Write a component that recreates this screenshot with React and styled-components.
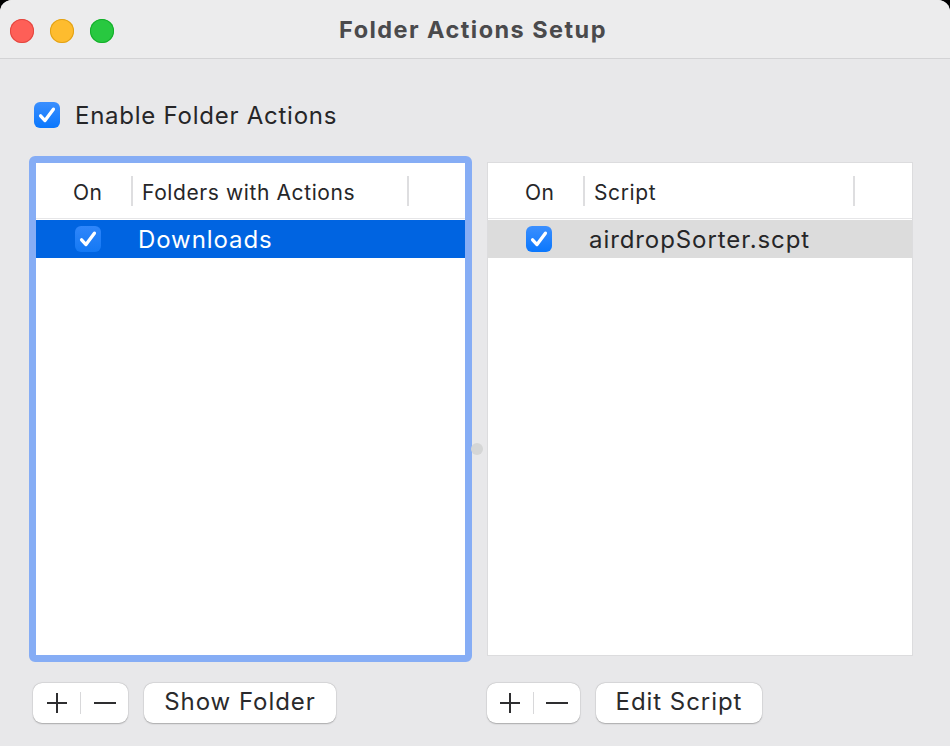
import React from 'react'
import styled, { createGlobalStyle } from 'styled-components'

const GlobalStyle = createGlobalStyle`
  html, body {
    margin: 0;
    padding: 0;
    background: #000;
  }
  body {
    font-family: Inter, "Noto Sans", "Liberation Sans", sans-serif;
    -webkit-font-smoothing: antialiased;
  }
`;

const Window = styled.div`
  width: 950px;
  height: 746px;
  display: flex;
  flex-direction: column;
  background: #e8e8ea;
  border-radius: 12px 12px 0 0;
  overflow: hidden;
`;

const TitleBar = styled.div`
  height: 58px;
  flex: none;
  display: grid;
  grid-template-columns: 1fr auto 1fr;
  align-items: center;
  background: #ececed;
  border-bottom: 1px solid #d3d3d5;
`;

const Lights = styled.div`
  display: flex;
  gap: 16px;
  padding-left: 10px;
  padding-top: 4px;
`;

const Light = styled.span`
  width: 24px;
  height: 24px;
  border-radius: 50%;
  background: ${p => p.color};
  box-shadow: inset 0 0 0 1px ${p => p.edge};
`;

const Title = styled.div`
  font-size: 23.5px;
  font-weight: 700;
  color: #4a4a4c;
  letter-spacing: 1.45px;
  margin-right: 4px;
`;

const Content = styled.div`
  flex: 1;
  display: flex;
  flex-direction: column;
`;

const EnableRow = styled.label`
  display: flex;
  align-items: center;
  gap: 15px;
  margin: 42px 0 0 34px;
  height: 28px;
  font-size: 24px;
  letter-spacing: 0.75px;
  color: #262628;
`;

const Box = styled.span`
  width: 26px;
  height: 26px;
  border-radius: 6px;
  flex: none;
  display: flex;
  align-items: center;
  justify-content: center;
  background: ${p => (p.$onBlue ? 'linear-gradient(#2f86fb, #1479f4)' : 'linear-gradient(#3b8ffe, #0a77fd)')};
`;

const Panes = styled.div`
  display: grid;
  grid-template-columns: 443px 15px 426px;
  margin: 27px 0 0 29px;
  height: 506px;
`;

const Table = styled.div`
  display: flex;
  flex-direction: column;
  background: #fff;
  border: ${p => (p.$focused ? '7px solid #86adf5' : '1px solid #dcdcde')};
  border-radius: ${p => (p.$focused ? '6px' : '0')};
  margin: ${p => (p.$focused ? '0' : '6px 0 6px')};
  overflow: hidden;
`;

const Header = styled.div`
  height: 56px;
  flex: none;
  display: flex;
  align-items: center;
  border-bottom: 1px solid #e6e6e8;
  font-size: 21px;
  color: #262628;
  padding-top: 3px;
  box-sizing: border-box;
`;

const OnHead = styled.div`
  width: 95px;
  padding-left: 37px;
  box-sizing: border-box;
  letter-spacing: 0.4px;
`;

const Divider = styled.span`
  width: 2px;
  height: 30px;
  background: #dedee0;
  flex: none;
  margin-top: -3px;
`;

const NameHead = styled.div`
  width: ${p => p.$w}px;
  padding-left: 9px;
  box-sizing: border-box;
  letter-spacing: 0.6px;
`;

const Row = styled.div`
  height: 38px;
  display: flex;
  align-items: center;
  margin-top: 1px;
  background: ${p => (p.$selected ? '#0064e1' : '#dcdcdc')};
  color: ${p => (p.$selected ? '#fff' : '#262628')};
  font-size: 24px;
  padding-left: ${p => p.$pad}px;
`;

const RowName = styled.span`
  margin-left: ${p => p.$gap}px;
  letter-spacing: 0.92px;
`;

const Splitter = styled.div`
  display: flex;
  align-items: center;
  justify-content: flex-start;
`;

const Dot = styled.span`
  width: 12px;
  height: 12px;
  border-radius: 50%;
  background: #d5d6d6;
  margin-left: -1px;
  margin-top: 80px;
`;

const Footer = styled.div`
  display: grid;
  grid-template-columns: 454px 1fr;
  margin: 21px 0 0 33px;
`;

const ButtonGroup = styled.div`
  display: flex;
  gap: ${p => p.$gap}px;
`;

const Button = styled.button`
  height: 40px;
  width: ${p => p.$w}px;
  border: none;
  border-radius: 9px;
  background: #fff;
  box-shadow: 0 0.5px 1.5px rgba(0, 0, 0, 0.25), 0 0 0 0.5px rgba(0, 0, 0, 0.06);
  font-family: inherit;
  font-size: 24px;
  letter-spacing: 0.95px;
  color: #2a2a2c;
  padding: 0 0 3px;
  display: flex;
  align-items: center;
  justify-content: center;
`;

const Segment = styled.div`
  height: 40px;
  width: ${p => p.$w}px;
  border-radius: 9px;
  background: #fff;
  box-shadow: 0 0.5px 1.5px rgba(0, 0, 0, 0.25), 0 0 0 0.5px rgba(0, 0, 0, 0.06);
  display: flex;
  align-items: center;
`;

const SegItem = styled.span`
  flex: 1;
  display: flex;
  align-items: center;
  justify-content: center;
`;

const SegLine = styled.span`
  width: 1px;
  height: 22px;
  background: #d8d8da;
`;

const Check = ({ onBlue }) => (
  <Box $onBlue={onBlue}>
    <svg width="26" height="26" viewBox="0 0 26 26">
      <path d="M6.6 13.8 L11 18.6 L19.4 7.2" fill="none" stroke="#fff" strokeWidth="3.3" strokeLinecap="round" strokeLinejoin="round" />
    </svg>
  </Box>
);

const Plus = () => (
  <svg width="22" height="22" viewBox="0 0 22 22">
    <path d="M11 1 V21 M1 11 H21" stroke="#2e2e30" strokeWidth="2" />
  </svg>
);

const Minus = () => (
  <svg width="22" height="22" viewBox="0 0 22 22">
    <path d="M0 11 H22" stroke="#2e2e30" strokeWidth="2" />
  </svg>
);

const AddRemove = ({ w }) => (
  <Segment $w={w}>
    <SegItem><Plus /></SegItem>
    <SegLine />
    <SegItem><Minus /></SegItem>
  </Segment>
);

const App = () => {
  return (
    <>
      <GlobalStyle />
      <Window>
        <TitleBar>
          <Lights>
            <Light color="#fe5f57" edge="#e2463f" />
            <Light color="#febc2e" edge="#e1a116" />
            <Light color="#28c840" edge="#14ae2a" />
          </Lights>
          <Title>Folder Actions Setup</Title>
          <div />
        </TitleBar>
        <Content>
          <EnableRow>
            <Check />
            Enable Folder Actions
          </EnableRow>
          <Panes>
            <Table $focused>
              <Header>
                <OnHead>On</OnHead>
                <Divider />
                <NameHead $w={274}>Folders with Actions</NameHead>
                <Divider />
              </Header>
              <Row $selected $pad={39}>
                <Check onBlue />
                <RowName $gap={37}>Downloads</RowName>
              </Row>
            </Table>
            <Splitter>
              <Dot />
            </Splitter>
            <Table>
              <Header>
                <OnHead>On</OnHead>
                <Divider />
                <NameHead $w={268}>Script</NameHead>
                <Divider />
              </Header>
              <Row $pad={38}>
                <Check />
                <RowName $gap={37}>airdropSorter.scpt</RowName>
              </Row>
            </Table>
          </Panes>
          <Footer>
            <ButtonGroup $gap={16}>
              <AddRemove w={95} />
              <Button $w={192}>Show Folder</Button>
            </ButtonGroup>
            <ButtonGroup $gap={16}>
              <AddRemove w={93} />
              <Button $w={166}>Edit Script</Button>
            </ButtonGroup>
          </Footer>
        </Content>
      </Window>
    </>
  )
}

export default App
